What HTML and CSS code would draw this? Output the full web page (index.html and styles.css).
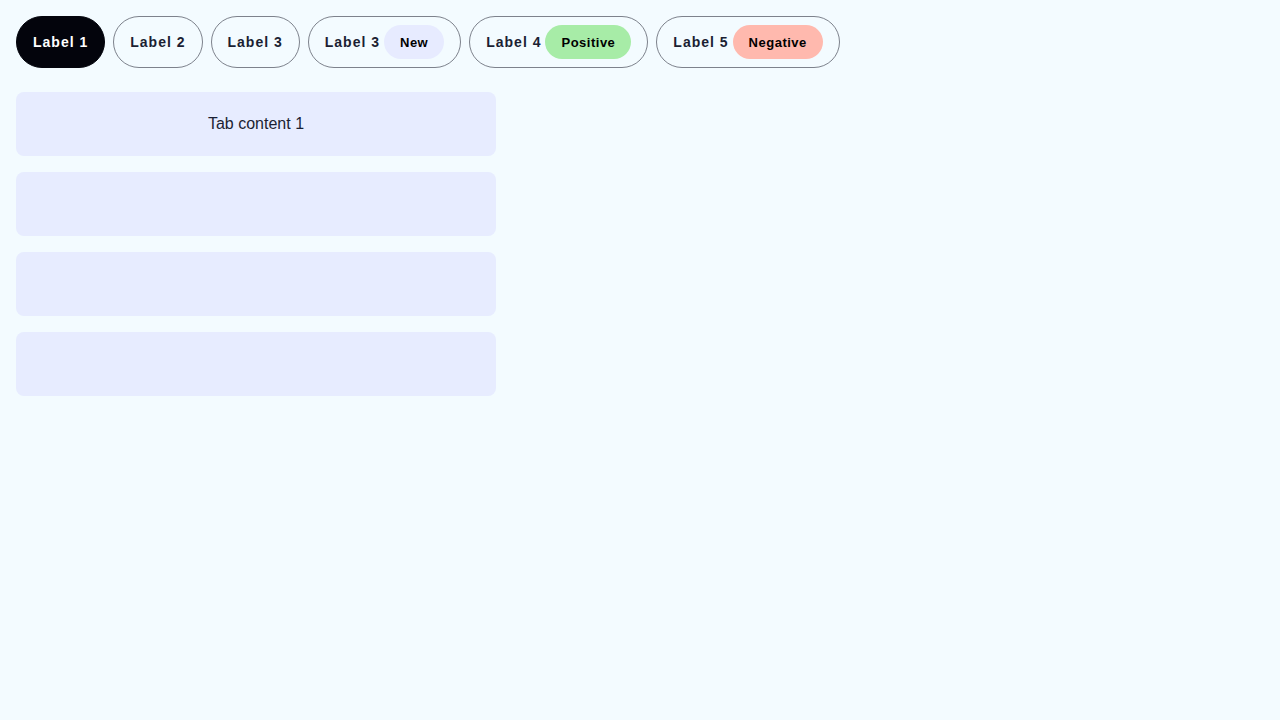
FILE: index.html
```html
<!DOCTYPE html>
<html>
<head>
<meta charset="utf-8">
<link rel="stylesheet" href="styles.css">
</head>
<body>
<div class="page">
  <div class="tabs">
    <button class="tab active"><span class="label">Label 1</span></button>
    <button class="tab"><span class="label">Label 2</span></button>
    <button class="tab"><span class="label">Label 3</span></button>
    <button class="tab"><span class="label">Label 3</span><span class="badge badge-new">New</span></button>
    <button class="tab"><span class="label">Label 4</span><span class="badge badge-pos">Positive</span></button>
    <button class="tab"><span class="label">Label 5</span><span class="badge badge-neg">Negative</span></button>
  </div>
  <div class="cards">
    <div class="card">Tab content 1</div>
    <div class="card"></div>
    <div class="card"></div>
    <div class="card"></div>
  </div>
</div>
</body>
</html>
```
FILE: styles.css
```css
html, body {
  margin: 0;
  padding: 0;
  background: #f3fbff;
}
body {
  font-family: "Liberation Sans", Arial, sans-serif;
  color: #1b1f33;
}
.page {
  padding: 16px;
  display: flex;
  flex-direction: column;
  gap: 24px;
}
.tabs {
  display: flex;
  gap: 8px;
}
.tab {
  box-sizing: border-box;
  height: 52px;
  display: flex;
  align-items: center;
  gap: 4px;
  padding: 0 16px;
  border: 1px solid #7d828c;
  border-radius: 999px;
  background: transparent;
  font-family: "Liberation Sans", Arial, sans-serif;
  font-weight: 700;
  font-size: 14px;
  letter-spacing: 1px;
  color: #1b1f33;
  cursor: pointer;
}
.tab.active {
  background: #03040c;
  border-color: #03040c;
  color: #ffffff;
}
.badge {
  height: 34px;
  display: flex;
  align-items: center;
  padding: 0 16px;
  border-radius: 999px;
  font-size: 13px;
  letter-spacing: 0.5px;
  color: #000;
}
.badge-new { background: #e7ebff; }
.badge-pos { background: #a7eca7; }
.badge-neg { background: #ffb9ae; }
.cards {
  display: flex;
  flex-direction: column;
  gap: 16px;
  width: 480px;
}
.card {
  height: 64px;
  border-radius: 8px;
  background: #e7ecff;
  display: flex;
  align-items: center;
  justify-content: center;
  font-size: 16px;
  color: #1b1f33;
}
```
